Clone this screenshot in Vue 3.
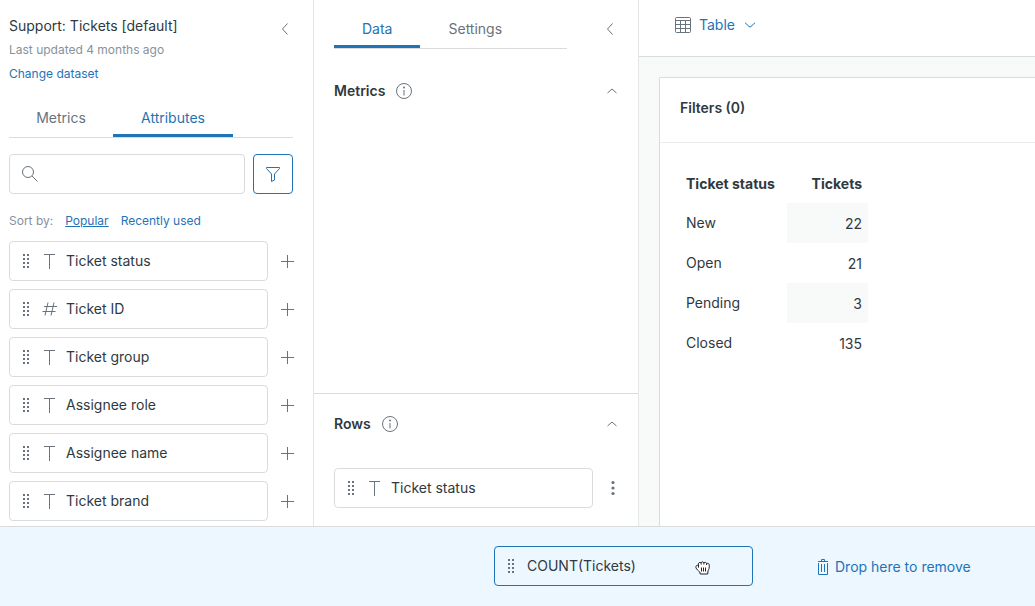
<script setup>
import { ref } from 'vue'

const search = ref('')
const attributes = [
  { name: 'Ticket status', type: 'text' },
  { name: 'Ticket ID', type: 'number' },
  { name: 'Ticket group', type: 'text' },
  { name: 'Assignee role', type: 'text' },
  { name: 'Assignee name', type: 'text' },
  { name: 'Ticket brand', type: 'text' },
]
const results = [
  { status: 'New', tickets: 22 },
  { status: 'Open', tickets: 21 },
  { status: 'Pending', tickets: 3 },
  { status: 'Closed', tickets: 135 },
]
</script>

<template>
  <div class="app">
    <div class="workspace">
      <aside class="dataset">
        <header class="dataset-head">
          <div>
            <h1>Support: Tickets [default]</h1>
            <p class="updated">Last updated 4 months ago</p>
            <a class="change" href="#">Change dataset</a>
          </div>
          <button class="icon-btn" type="button" aria-label="Collapse dataset panel">
            <svg width="16" height="16" viewBox="0 0 16 16"><path d="M10.5 2.5 5.5 8l5 5.5" /></svg>
          </button>
        </header>

        <nav class="tabs dataset-tabs">
          <button type="button" class="tab">Metrics</button>
          <button type="button" class="tab active">Attributes</button>
        </nav>

        <div class="search-row">
          <label class="search">
            <svg width="16" height="16" viewBox="0 0 16 16"><circle cx="6" cy="6" r="5.5" /><path d="M10 10l5.5 5.5" /></svg>
            <input v-model="search" type="text" aria-label="Search attributes" />
          </label>
          <button class="filter" type="button" aria-label="Filter attributes">
            <svg width="16" height="16" viewBox="0 0 16 16"><path d="M1.5 1.5h13v1L9.5 8v6l-3 1.500V8l-5-5.500z" /></svg>
          </button>
        </div>

        <div class="sort">
          <span>Sort by:</span>
          <a class="current" href="#">Popular</a>
          <a href="#">Recently used</a>
        </div>

        <ul class="attributes">
          <li v-for="item in attributes" :key="item.name">
            <div class="pill">
              <svg class="grip" width="6" height="14" viewBox="0 0 6 14"><path d="M0 0h2v2H0zM4 0h2v2H4zM0 4h2v2H0zM4 4h2v2H4zM0 8h2v2H0zM4 8h2v2H4zM0 12h2v2H0zM4 12h2v2H4z" /></svg>
              <svg v-if="item.type === 'text'" class="kind" width="16" height="16" viewBox="0 0 16 16"><path d="M3 1.500h11M8.500 1.500V16" /></svg>
              <svg v-else class="kind" width="16" height="16" viewBox="0 0 16 16"><path d="M7 1.500l-3 13M13 1.500l-3 13M3 5.500h13M1.500 10.500h13" /></svg>
              <span>{{ item.name }}</span>
            </div>
            <button class="add" type="button" :aria-label="'Add ' + item.name">
              <svg width="13" height="13" viewBox="0 0 13 13"><path d="M6.500 0v13M0 6.500h13" /></svg>
            </button>
          </li>
        </ul>
      </aside>

      <section class="config">
        <div class="config-head">
          <nav class="tabs">
            <button type="button" class="tab active">Data</button>
            <button type="button" class="tab">Settings</button>
          </nav>
          <button class="icon-btn" type="button" aria-label="Collapse configuration panel">
            <svg width="16" height="16" viewBox="0 0 16 16"><path d="M10.5 2.5 5.500 8l5 5.500" /></svg>
          </button>
        </div>

        <section class="zone metrics">
          <div class="zone-head">
            <h2>Metrics</h2>
            <svg width="16" height="16" viewBox="0 0 16 16"><circle cx="8" cy="8" r="7.500" /><path d="M8 7v5.500" /><circle class="dot" cx="8" cy="4.500" r="1" /></svg>
            <button class="icon-btn" type="button" aria-label="Collapse metrics">
              <svg width="10" height="6" viewBox="0 0 10 6"><path d="M.5 5 5 1l4.500 4" /></svg>
            </button>
          </div>
        </section>

        <section class="zone rows">
          <div class="zone-head">
            <h2>Rows</h2>
            <svg width="16" height="16" viewBox="0 0 16 16"><circle cx="8" cy="8" r="7.500" /><path d="M8 7v5.500" /><circle class="dot" cx="8" cy="4.500" r="1" /></svg>
            <button class="icon-btn" type="button" aria-label="Collapse rows">
              <svg width="10" height="6" viewBox="0 0 10 6"><path d="M.5 5 5 1l4.500 4" /></svg>
            </button>
          </div>
          <div class="row-item">
            <div class="pill">
              <svg class="grip" width="6" height="14" viewBox="0 0 6 14"><path d="M0 0h2v2H0zM4 0h2v2H4zM0 4h2v2H0zM4 4h2v2H4zM0 8h2v2H0zM4 8h2v2H4zM0 12h2v2H0zM4 12h2v2H4z" /></svg>
              <svg class="kind" width="16" height="16" viewBox="0 0 16 16"><path d="M3 1.500h11M8.500 1.500V16" /></svg>
              <span>Ticket status</span>
            </div>
            <button class="more" type="button" aria-label="Row options">
              <svg width="4" height="16" viewBox="0 0 4 16"><circle cx="2" cy="2.500" r="1.600" /><circle cx="2" cy="8" r="1.600" /><circle cx="2" cy="13.500" r="1.600" /></svg>
            </button>
          </div>
        </section>
      </section>

      <main class="report">
        <header class="report-head">
          <button class="visual" type="button">
            <svg class="grid-icon" width="16" height="16" viewBox="0 0 16 16"><path d="M.5 1.500a1 1 0 0 1 1-1h13a1 1 0 0 1 1 1v13a1 1 0 0 1-1 1h-13a1 1 0 0 1-1-1zM.5 3.500h15M.5 7.500h15M.5 11.500h15M5.500 3.500v12M10.500 3.500v12" /></svg>
            <span>Table</span>
            <svg width="12" height="6" viewBox="0 0 12 6"><path d="M1 .7 5 4.500q1 .9 2 0L11 .7" /></svg>
          </button>
        </header>
        <div class="canvas">
          <div class="sheet">
            <h2 class="filters">Filters (0)</h2>
            <table>
              <thead>
                <tr><th>Ticket status</th><th class="value">Tickets</th></tr>
              </thead>
              <tbody>
                <tr v-for="row in results" :key="row.status">
                  <td>{{ row.status }}</td>
                  <td class="value">{{ row.tickets }}</td>
                </tr>
              </tbody>
            </table>
          </div>
        </div>
      </main>
    </div>

    <footer class="dropbar">
      <div class="pill dragged">
        <svg class="grip" width="6" height="14" viewBox="0 0 6 14"><path d="M0 0h2v2H0zM4 0h2v2H4zM0 4h2v2H0zM4 4h2v2H4zM0 8h2v2H0zM4 8h2v2H4zM0 12h2v2H0zM4 12h2v2H4z" /></svg>
        <span>COUNT(Tickets)</span>
        <svg class="hand" width="16" height="14" viewBox="0 0 16 14">
          <path d="M3.500 3.500C3 1.500 5 .8 6 2c.5-1.500 2.400-1.500 2.900-.1 1-1 2.600-.5 2.700.7 1.200-.7 2.700 0 2.700 1.500 0 2.500-.2 4-1.300 5.700l-.3 3.200H5.200L4.800 11C3 9.500 1.500 8.300 1 6.800.5 5 1.500 4 3.500 4.300z" />
          <path class="fingers" d="M3.500 3.500v3.200M6 2l.3 1.500M8.900 1.900v1.600M11.600 2.600v1.500M6.500 6.500v4M8.500 6.500v4M10.500 6.500v4" />
        </svg>
      </div>
      <div class="remove">
        <svg width="12" height="16" viewBox="0 0 12 16"><path d="M1.500 4v11.500h9V4M1 2.500h10M4.500 2.500v-2h3v2M4.500 5v8M7.500 5v8" /></svg>
        <span>Drop here to remove</span>
      </div>
    </footer>
  </div>
</template>

<style>
body {
  margin: 0;
}
</style>

<style scoped>
.app {
  display: flex;
  flex-direction: column;
  height: 100vh;
  overflow: hidden;
  background: #fff;
  color: #2f3941;
  font-family: Inter, "Liberation Sans", sans-serif;
  font-size: 14px;
  line-height: 20px;
}
.app * {
  box-sizing: border-box;
}
h1,
h2,
p,
ul {
  margin: 0;
  padding: 0;
  font-size: 14px;
}
h2 {
  font-weight: 600;
}
a {
  color: #1f73b7;
  text-decoration: none;
}
button {
  padding: 0;
  border: 0;
  background: none;
  color: #68737d;
  font: inherit;
  cursor: pointer;
}
svg {
  display: block;
  flex: none;
  fill: none;
  stroke: currentColor;
}
.workspace {
  display: grid;
  grid-template-columns: 314px 325px minmax(0, 1fr);
  flex: 1;
  min-height: 0;
}
.dataset,
.config {
  min-height: 0;
  overflow: hidden;
  border-right: 1px solid #e4e7e8;
}
.icon-btn {
  display: flex;
  align-items: center;
  justify-content: center;
  width: 16px;
  height: 30px;
}

.dataset-head {
  display: flex;
  justify-content: space-between;
  padding: 14px 20px 0 9px;
  line-height: 24px;
}
.dataset-head h1 {
  font-weight: 400;
}
.updated,
.change {
  display: block;
  font-size: 12px;
}
.updated {
  color: #87929d;
}
.tabs {
  display: flex;
  border-bottom: 1px solid #d8dcde;
}
.tab {
  height: 39px;
  padding: 3px 28px 0;
  border-bottom: 3px solid transparent;
}
.tab.active {
  border-color: #1f73b7;
  color: #1f73b7;
}
.dataset-tabs {
  display: grid;
  grid-template-columns: 104px 120px;
  margin: 12px 20px 16px 9px;
}
.dataset-tabs .tab {
  padding: 3px 0 0;
}
.search-row {
  display: flex;
  gap: 8px;
  padding: 0 20px 0 9px;
}
.search {
  display: flex;
  flex: 1;
  align-items: center;
  gap: 8px;
  min-width: 0;
  height: 40px;
  padding: 0 12px;
  border: 1px solid #d8dcde;
  border-radius: 4px;
  color: #68737d;
}
.search input {
  flex: 1;
  min-width: 0;
  border: 0;
  outline: 0;
  background: none;
  font: inherit;
}
.filter {
  display: flex;
  align-items: center;
  justify-content: center;
  width: 40px;
  height: 40px;
  border: 1px solid #1f73b7;
  border-radius: 4px;
  color: #1f73b7;
}
.sort {
  display: flex;
  gap: 12px;
  padding: 17px 9px 10px;
  color: #87929d;
  font-size: 12px;
}
.sort .current {
  text-decoration: underline;
}
.attributes {
  display: flex;
  flex-direction: column;
  gap: 8px;
  padding: 0 6px 0 9px;
  list-style: none;
}
.attributes li,
.row-item {
  display: flex;
}
.pill {
  display: flex;
  flex: 1;
  align-items: center;
  height: 40px;
  padding: 0 13px;
  border: 1px solid #d8dcde;
  border-radius: 4px;
}
.grip {
  fill: #68737d;
  stroke: none;
}
.kind {
  margin: 0 9px 0 12px;
  color: #68737d;
}
.add,
.more {
  display: flex;
  align-items: center;
  justify-content: center;
  width: 39px;
}

.config {
  display: flex;
  flex-direction: column;
}
.config-head {
  display: flex;
  justify-content: space-between;
  padding: 9px 20px 0;
}
.config-head .tabs {
  flex: 1;
  margin-right: 35px;
}
.config-head .icon-btn {
  height: 40px;
}
.zone {
  padding: 10px 0 18px 20px;
}
.metrics {
  flex: 1;
  padding-top: 22px;
}
.rows {
  border-top: 1px solid #d8dcde;
}
.zone-head {
  display: flex;
  align-items: center;
  height: 40px;
  gap: 11px;
  padding-right: 18px;
  color: #68737d;
}
.zone-head h2 {
  color: #2f3941;
}
.zone-head .icon-btn {
  margin-left: auto;
}
.dot {
  fill: currentColor;
  stroke: none;
}
.row-item {
  margin-top: 24px;
  padding-right: 6px;
}
.more svg {
  fill: currentColor;
  stroke: none;
}

.report {
  display: flex;
  flex-direction: column;
  min-height: 0;
}
.report-head {
  height: 57px;
  padding: 15px 36px;
  border-bottom: 1px solid #d8dcde;
}
.visual {
  display: flex;
  align-items: center;
  color: #1f73b7;
}
.visual span {
  margin: 0 9px 0 8px;
}
.grid-icon {
  color: #68737d;
}
.canvas {
  flex: 1;
  padding: 20px 0 0 20px;
  background: #f8f9f9;
}
.sheet {
  height: 100%;
  border: 1px solid #d8dcde;
  border-width: 1px 0 0 1px;
  border-radius: 2px 0 0;
  background: #fff;
}
.filters {
  padding: 20px 20px 24px;
  border-bottom: 1px solid #e9ebed;
}
table {
  margin: 20px;
  border-collapse: collapse;
}
th,
td {
  height: 40px;
  padding: 0 6px;
  text-align: left;
}
th {
  padding-top: 2px;
  font-weight: 700;
}
th:first-child {
  width: 107px;
}
th.value {
  width: 81px;
}
.value {
  padding-top: 2px;
  text-align: right;
}
tbody tr:nth-child(odd) .value {
  background: #f8f9f9;
}

.dropbar {
  display: flex;
  align-items: flex-start;
  gap: 64px;
  height: 80px;
  padding: 19px 0 0 494px;
  border-top: 1px solid #d8dcde;
  background: #edf7ff;
}
.dragged {
  position: relative;
  flex: none;
  width: 259px;
  gap: 13px;
  border-color: #1f73b7;
}
.hand {
  position: absolute;
  top: 14px;
  left: 200px;
  fill: #fff;
  stroke: #1d242a;
}
.fingers {
  fill: none;
}
.remove {
  display: flex;
  align-items: center;
  gap: 6px;
  height: 42px;
  color: #1f73b7;
}
</style>
